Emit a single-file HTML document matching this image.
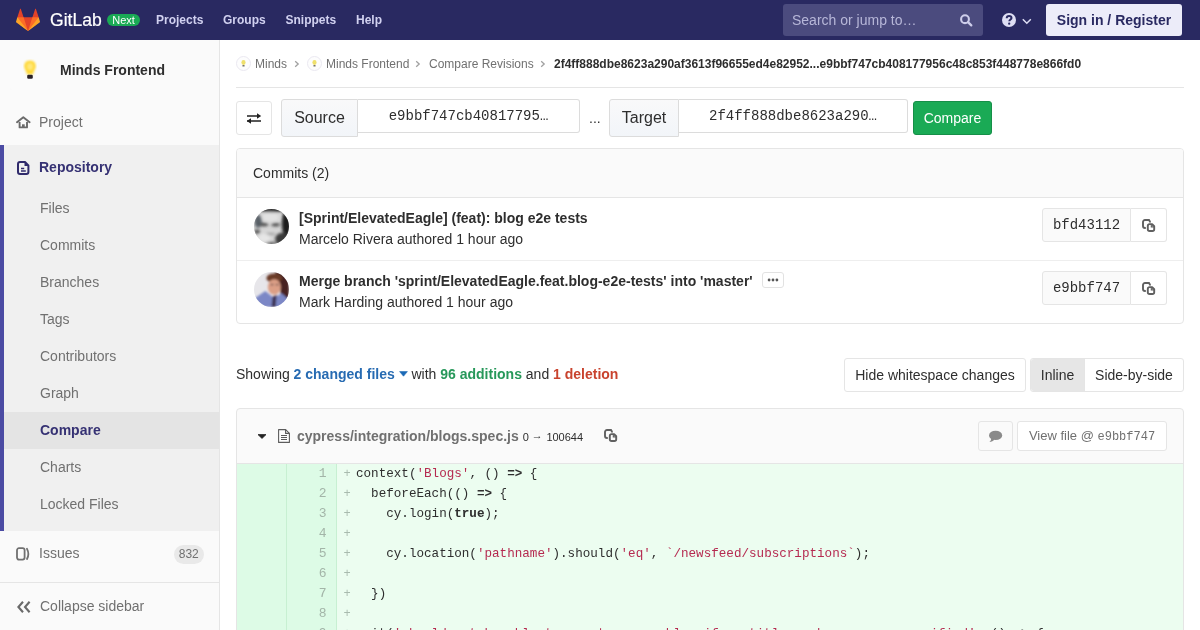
<!DOCTYPE html>
<html><head><meta charset="utf-8"><style>
*{box-sizing:border-box;margin:0;padding:0}
html,body{width:1200px;height:630px;overflow:hidden;background:#fff;font-family:"Liberation Sans",sans-serif;font-size:14px;color:#2e2e2e}
.nav{position:absolute;left:0;top:0;width:1200px;height:40px;background:#292961}
.nav .t{position:absolute;color:#d1d1f0;font-weight:bold;font-size:12px;top:12px;line-height:16px}
.logo{position:absolute;left:16px;top:8px}
.gl{position:absolute;left:49.6px;top:6.6px;color:#fff;font-size:18.7px;line-height:26px;transform:scaleX(.94);transform-origin:0 0;-webkit-text-stroke:.2px #fff}
.next{position:absolute;left:107px;top:14px;width:33px;height:12px;border-radius:6px;background:#1aaa55;color:#fff;font-size:11px;line-height:12px;text-align:center}
.search{position:absolute;left:783px;top:4px;width:200px;height:32px;border-radius:3px;background:#4b4b7e;color:#b7b7d8;font-size:14px;line-height:32px;padding-left:9px}
.signin{position:absolute;left:1046px;top:4px;width:136px;height:32px;border-radius:3px;background:#ececf9;color:#292961;font-weight:bold;font-size:14px;line-height:32px;text-align:center}
.side{position:absolute;left:0;top:40px;width:220px;height:590px;background:#fafafa;border-right:1px solid #e5e5e5}
.side .it{position:absolute;left:40px;color:#707070;font-size:14px;line-height:16px}
.main{position:absolute;left:220px;top:40px;width:980px;height:590px}
.abs{position:absolute}
.mono{font-family:"Liberation Mono",monospace}
.bc{position:absolute;font-size:12px;line-height:16px;color:#707070;white-space:nowrap}
.btn{border:1px solid #e5e5e5;border-radius:3px;background:#fff;font-size:14px;color:#2e2e2e;white-space:nowrap}
.addon{border:1px solid #dcdcdc;border-radius:3px 0 0 3px;background:linear-gradient(#f9f9fa,#f2f5f9);font-size:16px;line-height:36px;text-align:center;color:#2e2e2e}
.inp{border:1px solid #dcdcdc;border-left:0;border-radius:0 3px 3px 0;background:#fff;font-size:14px;line-height:32px;text-align:center;color:#2e2e2e}
.av{width:36px;height:36px;border-radius:50%;border:1px solid #e5e5e5}
.ct{font-weight:bold;font-size:14px;line-height:16px;color:#2e2e2e;white-space:nowrap}
.cs{font-size:14px;line-height:16px;color:#2e2e2e;white-space:nowrap}
.sha{width:89px;height:34px;border:1px solid #e5e5e5;border-radius:3px 0 0 3px;background:#fafafa;font-size:14px;line-height:32px;text-align:center;color:#2e2e2e}
.cpy{width:36px;height:34px;border:1px solid #e5e5e5;border-left:0;border-radius:0 3px 3px 0;background:#fff}
.code{background:#ecfdf0;overflow:hidden}
.ln{position:absolute;top:0;width:50px;height:200px;background:#ddfbe6;border-right:1px solid #c7f0d2}
.num{position:absolute;left:49.5px;width:40px;text-align:right;font-family:"Liberation Mono",monospace;font-size:13px;line-height:20px;color:#a3b5a8}
.pl{position:absolute;left:106.6px;font-family:"Liberation Mono",monospace;font-size:12px;line-height:19px;margin-top:1px;color:#a9bbae}
.cl{position:absolute;left:119px;font-family:"Liberation Mono",monospace;font-size:12.6px;line-height:20px;color:#2e2e2e;white-space:pre}
.cl r{color:#b52a50}
body{will-change:transform}
</style></head><body>
<div class="nav">
  <svg class="logo" width="24" height="24" viewBox="0 0 36 36"><path fill="#e24329" d="M2 14l9.38 9v-9l-4-12.28c-.205-.632-1.176-.632-1.38 0z"/><path fill="#e24329" d="M34 14l-9.38 9v-9l4-12.28c.205-.632 1.176-.632 1.38 0z"/><path fill="#e24329" d="M18,34.38 3,14 33,14 Z"/><path fill="#fc6d26" d="M18,34.38 11.38,14 2,14 6,25Z"/><path fill="#fc6d26" d="M18,34.38 24.62,14 34,14 30,25Z"/><path fill="#fca326" d="M2 14L.1 20.16c-.18.565 0 1.2.5 1.56l17.42 12.66z"/><path fill="#fca326" d="M34 14l1.9 6.16c.18.565 0 1.2-.5 1.56L18 34.38z"/></svg>
  <div class="gl">GitLab</div>
  <div class="next">Next</div>
  <div class="t" style="left:156px">Projects</div>
  <div class="t" style="left:223px">Groups</div>
  <div class="t" style="left:285.5px">Snippets</div>
  <div class="t" style="left:356px">Help</div>
  <div class="search">Search or jump to…</div>
  <svg class="abs" style="left:958px;top:12px" width="16" height="16" viewBox="0 0 16 16"><circle cx="7" cy="7.2" r="3.9" fill="none" stroke="#cdcdea" stroke-width="2.1"/><path d="M10 10.2 L13.3 13.4" stroke="#cdcdea" stroke-width="2.3" stroke-linecap="round"/></svg>
  <svg class="abs" style="left:1002px;top:13px" width="14" height="14" viewBox="0 0 14 14"><circle cx="7" cy="7" r="7" fill="#dedef4"/><path d="M4.7 5.3 C4.7 3.6 5.8 2.9 7.1 2.9 C8.5 2.9 9.5 3.7 9.5 4.9 C9.5 6.4 7.4 6.6 7.3 8.3" fill="none" stroke="#292961" stroke-width="2"/><circle cx="7.2" cy="10.7" r="1.15" fill="#292961"/></svg>
  <svg class="abs" style="left:1021px;top:17px" width="12" height="8" viewBox="0 0 12 8"><path d="M1.8 2.2 L5.8 6.2 L9.8 2.2" fill="none" stroke="#dedef4" stroke-width="1.5"/></svg>
  <div class="signin">Sign in / Register</div>
</div>
<div class="side">
  <div class="abs" style="left:60px;top:22px;font-weight:bold;font-size:14px;color:#2e2e2e">Minds Frontend</div>
  <div class="it" style="left:39px;top:74px">Project</div>
  <div class="abs" style="left:0;top:105px;width:219px;height:386px;background:#f0f0f0"></div>
  <div class="abs" style="left:0;top:105px;width:4px;height:386px;background:#4b4ba3"></div>
  <div class="abs" style="left:0;top:372px;width:219px;height:37px;background:#e4e4e4"></div>
  <div class="abs" style="left:0;top:372px;width:4px;height:37px;background:#4b4ba3"></div>
  <div class="it" style="left:39px;top:119px;color:#353173;font-weight:bold">Repository</div>
  <div class="it" style="top:160px">Files</div>
  <div class="it" style="top:197px">Commits</div>
  <div class="it" style="top:234px">Branches</div>
  <div class="it" style="top:271px">Tags</div>
  <div class="it" style="top:308px">Contributors</div>
  <div class="it" style="top:345px">Graph</div>
  <div class="it" style="top:382px;color:#353173;font-weight:bold">Compare</div>
  <div class="it" style="top:419px">Charts</div>
  <div class="it" style="top:456px">Locked Files</div>
  <div class="it" style="left:39px;top:505px">Issues</div>
  <div class="abs" style="left:0;top:542px;width:219px;height:1px;background:#e5e5e5"></div>
  <div class="it" style="top:558px">Collapse sidebar</div>

  <div class="abs" style="left:10px;top:10px;width:40px;height:40px;background:#fbfbfb;border-radius:3px"></div>
  <svg class="abs" style="left:20px;top:18px" width="20" height="24" viewBox="0 0 20 24"><defs><filter id="bl"><feGaussianBlur stdDeviation="0.8"/></filter><filter id="bl2"><feGaussianBlur stdDeviation="0.4"/></filter></defs><path d="M10 2.5 C5.8 2.5 4.2 5.6 4.2 8.2 C4.2 11 6.4 12.6 7 16.6 L13 16.6 C13.6 12.6 15.8 11 15.8 8.2 C15.8 5.6 14.2 2.5 10 2.5Z" fill="#ffd93a" filter="url(#bl)"/><ellipse cx="10" cy="8.5" rx="3" ry="3.6" fill="#ffe879" filter="url(#bl)"/><rect x="7.2" y="16.8" width="5.6" height="3.9" rx="1.2" fill="#2a2228" filter="url(#bl2)"/></svg>
  <svg class="abs" style="left:16px;top:76px" width="15" height="13" viewBox="0 0 15 13"><path d="M1 6.2 L7.3 1.2 L13.6 6.2" fill="none" stroke="#6b6b6b" stroke-width="1.9" stroke-linejoin="round" stroke-linecap="round"/><path d="M3.6 6 V11.4 H11 V6" fill="none" stroke="#6b6b6b" stroke-width="1.9" stroke-linejoin="round"/><rect x="6" y="8.3" width="2.7" height="3.2" fill="#6b6b6b"/></svg>
  <svg class="abs" style="left:17px;top:121px" width="13" height="14" viewBox="0 0 13 14"><path d="M3 1 H8 L11.4 4.4 V11 A2 2 0 0 1 9.4 13 H3 A2 2 0 0 1 1 11 V3 A2 2 0 0 1 3 1Z" fill="none" stroke="#2f2a6b" stroke-width="2" stroke-linejoin="round"/><path d="M7.5 0.8 L11.8 5 H7.5Z" fill="#2f2a6b"/><path d="M4 7.5 H7.2 M4 10 H8.8" stroke="#2f2a6b" stroke-width="1.4"/></svg>
  <svg class="abs" style="left:16px;top:507px" width="14" height="14" viewBox="0 0 14 14"><rect x="1" y="1.2" width="7.6" height="11.4" rx="2" fill="none" stroke="#707070" stroke-width="1.8"/><path d="M11 1.8 C12.6 4.8 12.6 9 11 12" fill="none" stroke="#707070" stroke-width="1.8" stroke-linecap="round"/></svg>
  <svg class="abs" style="left:16px;top:560px" width="15" height="14" viewBox="0 0 15 14"><path d="M7 1.7 L2.4 7 L7 12.3 M13.6 1.7 L9 7 L13.6 12.3" fill="none" stroke="#6a6a6a" stroke-width="2.1"/></svg>
  <div class="abs" style="left:174px;top:505px;width:29.5px;height:18.5px;border-radius:10px;background:#e9e9e9;color:#707070;font-size:12px;line-height:19px;text-align:center">832</div>

</div>
<div class="main">
  <!-- breadcrumbs -->
  <div class="bc" style="left:35px;top:16px">Minds</div>
  <div class="bc" style="left:106px;top:16px">Minds Frontend</div>
  <div class="bc" style="left:209px;top:16px">Compare Revisions</div>
  <div class="bc" style="left:334px;top:16px;color:#2e2e2e;font-weight:bold">2f4ff888dbe8623a290af3613f96655ed4e82952...e9bbf747cb408177956c48c853f448778e866fd0</div>
  <div class="abs" style="left:16px;top:47px;width:948px;height:1px;background:#e5e5e5"></div>
  <!-- compare form -->
  <div class="abs btn" style="left:16px;top:61px;width:36px;height:34px"></div>
  <div class="abs addon" style="left:61px;top:59px;width:77px;height:38px">Source</div>
  <div class="abs inp mono" style="left:138px;top:59px;width:222px;height:34px">e9bbf747cb40817795…</div>
  <div class="abs" style="left:369px;top:70px;font-size:14px">...</div>
  <div class="abs addon" style="left:389px;top:59px;width:70px;height:38px">Target</div>
  <div class="abs inp mono" style="left:459px;top:59px;width:229px;height:34px">2f4ff888dbe8623a290…</div>
  <div class="abs" style="left:693px;top:61px;width:79px;height:34px;background:#1aaa55;border:1px solid #168f48;border-radius:3px;color:#fff;font-size:14px;line-height:32px;text-align:center">Compare</div>
  <!-- commits panel -->
  <div class="abs" style="left:16px;top:108px;width:948px;height:176px;border:1px solid #e5e5e5;border-radius:4px;background:#fff"></div>
  <div class="abs" style="left:17px;top:109px;width:946px;height:49px;background:#fafafa;border-bottom:1px solid #e5e5e5;border-radius:3px 3px 0 0"></div>
  <div class="abs" style="left:33px;top:125px;font-size:14px;line-height:16px">Commits (2)</div>
  <div class="abs" style="left:17px;top:220px;width:946px;height:1px;background:#eee"></div>
<svg class="abs" style="left:33.5px;top:168.5px" width="35" height="35" viewBox="0 0 34 34"><defs><clipPath id="c1"><circle cx="17" cy="17" r="17"/></clipPath><filter id="b1" x="-20%" y="-20%" width="140%" height="140%"><feGaussianBlur stdDeviation="1.3"/></filter></defs><g clip-path="url(#c1)"><rect width="34" height="34" fill="#d6d6d6"/><g filter="url(#b1)"><ellipse cx="17" cy="0" rx="15" ry="3.2" fill="#2a2a2a"/><ellipse cx="31.5" cy="14" rx="4.5" ry="13" fill="#1e1e1e"/><ellipse cx="27.5" cy="29" rx="7" ry="6" fill="#3a3a3a"/><ellipse cx="4" cy="12" rx="3.6" ry="6.5" fill="#596068"/><ellipse cx="3" cy="22" rx="3" ry="2" fill="#555"/><ellipse cx="9.5" cy="15" rx="4.5" ry="1.7" fill="#4a4a4a"/><ellipse cx="21" cy="15.3" rx="4.2" ry="1.6" fill="#4a4a4a"/><ellipse cx="16" cy="24.2" rx="5" ry="1" fill="#9a9a9a"/><ellipse cx="16" cy="8" rx="8" ry="4.5" fill="#e2e2e2"/><ellipse cx="10" cy="28" rx="6" ry="4" fill="#e6e6e6"/><ellipse cx="17" cy="33.5" rx="6" ry="1.5" fill="#555"/></g></g></svg>
<svg class="abs" style="left:33.5px;top:231.5px" width="35" height="35" viewBox="0 0 34 34"><defs><clipPath id="c2"><circle cx="17" cy="17" r="17"/></clipPath><filter id="b2" x="-20%" y="-20%" width="140%" height="140%"><feGaussianBlur stdDeviation="1.2"/></filter></defs><g clip-path="url(#c2)"><rect width="34" height="34" fill="#e7e6ea"/><g filter="url(#b2)"><path d="M20 0 H34 V26 H26 C26 14 24 6 20 0Z" fill="#472322"/><ellipse cx="19.7" cy="6" rx="7.6" ry="4.6" fill="#6b3a26"/><ellipse cx="19.7" cy="14.6" rx="6.3" ry="7.6" fill="#dc9f86"/><ellipse cx="17.5" cy="12.2" rx="1.6" ry=".9" fill="#7a5a55"/><ellipse cx="22.5" cy="12.2" rx="1.6" ry=".9" fill="#7a5a55"/><path d="M0 26 L11 18.5 L19 25 L27 21 L34 27 V34 H0Z" fill="#7b87c6"/><path d="M18 24 L22 22 L21 34 H17Z" fill="#3d3252"/></g></g></svg>
  <div class="abs ct" style="left:79px;top:170px">[Sprint/ElevatedEagle] (feat): blog e2e tests</div>
  <div class="abs cs" style="left:79px;top:191px">Marcelo Rivera authored 1 hour ago</div>
  <div class="abs ct" style="left:79px;top:233px">Merge branch 'sprint/ElevatedEagle.feat.blog-e2e-tests' into 'master'</div>
  <div class="abs cs" style="left:79px;top:254px">Mark Harding authored 1 hour ago</div>
  <div class="abs sha mono" style="left:822px;top:168px">bfd43112</div>
  <div class="abs cpy" style="left:911px;top:168px"></div>
  <div class="abs sha mono" style="left:822px;top:231px">e9bbf747</div>
  <div class="abs cpy" style="left:911px;top:231px"></div>
  <!-- showing -->
  <div class="abs" style="left:16px;top:326px;font-size:14px;line-height:16px;white-space:nowrap">Showing <b style="color:#276bb2">2 changed files</b> <span style="display:inline-block;width:12.8px"></span>with <b style="color:#27985a">96 additions</b> and <b style="color:#c9432e">1 deletion</b></div>
  <div class="abs btn" style="left:624px;top:318px;width:182px;height:34px;line-height:32px;text-align:center">Hide whitespace changes</div>
  <div class="abs btn" style="left:810px;top:318px;width:154px;height:34px"></div>
  <div class="abs" style="left:811px;top:319px;width:54px;height:32px;background:#e6e6e6;border-right:1px solid #e5e5e5;border-radius:3px 0 0 3px;line-height:32px;text-align:center">Inline</div>
  <div class="abs" style="left:865px;top:319px;width:98px;height:32px;line-height:32px;text-align:center">Side-by-side</div>
  <!-- file -->
  <div class="abs" style="left:16px;top:368px;width:948px;height:300px;border:1px solid #e5e5e5;border-radius:4px 4px 0 0;background:#fafafa"></div>
  <div class="abs" style="left:17px;top:423px;width:946px;height:1px;background:#e5e5e5"></div>
  <div class="abs" style="left:77px;top:388px;font-size:14px;line-height:16px;font-weight:bold;color:#707070;white-space:nowrap">cypress/integration/blogs.spec.js <span style="font-weight:normal;font-size:11px;color:#2e2e2e">0 <span style="position:relative;top:-2px;margin-right:.5px">→</span> 100644</span></div>
  <div class="abs btn" style="left:758px;top:381px;width:35px;height:30px;background:#fafafa"></div>
  <div class="abs btn" style="left:797px;top:381px;width:150px;height:30px;line-height:28px;text-align:center;color:#707070;font-size:13px;white-space:nowrap">View file @ <span class="mono" style="font-size:12px">e9bbf747</span></div>
  <div class="abs code" style="left:17px;top:424px;width:946px;height:170px">
    <div class="ln" style="left:0"></div><div class="ln" style="left:50px"></div>
    <div class="num" style="top:0px">1</div><div class="pl" style="top:0px">+</div><pre class="cl" style="top:0px">context(<r>'Blogs'</r>, () <b>=></b> {</pre>
    <div class="num" style="top:20px">2</div><div class="pl" style="top:20px">+</div><pre class="cl" style="top:20px">  beforeEach(() <b>=></b> {</pre>
    <div class="num" style="top:40px">3</div><div class="pl" style="top:40px">+</div><pre class="cl" style="top:40px">    cy.login(<b>true</b>);</pre>
    <div class="num" style="top:60px">4</div><div class="pl" style="top:60px">+</div><pre class="cl" style="top:60px"></pre>
    <div class="num" style="top:80px">5</div><div class="pl" style="top:80px">+</div><pre class="cl" style="top:80px">    cy.location(<r>'pathname'</r>).should(<r>'eq'</r>, <r>`/newsfeed/subscriptions`</r>);</pre>
    <div class="num" style="top:100px">6</div><div class="pl" style="top:100px">+</div><pre class="cl" style="top:100px"></pre>
    <div class="num" style="top:120px">7</div><div class="pl" style="top:120px">+</div><pre class="cl" style="top:120px">  })</pre>
    <div class="num" style="top:140px">8</div><div class="pl" style="top:140px">+</div><pre class="cl" style="top:140px"></pre>
    <div class="num" style="top:160px">9</div><div class="pl" style="top:160px">+</div><pre class="cl" style="top:160px">  it(<r>'should not be able to create a new blog if no title or banner are specified'</r>, () <b>=></b> {</pre>

  </div>

  <svg class="abs" style="left:16px;top:16px" width="15" height="15" viewBox="0 0 15 15"><circle cx="7.5" cy="7.5" r="7" fill="#fdfdfd" stroke="#eae8f1" stroke-width="1"/><ellipse cx="7.5" cy="6.5" rx="2.1" ry="2.4" fill="#efe06c" filter="url(#bl2)"/><rect x="6.4" y="8.9" width="2.2" height="1.7" rx=".5" fill="#77736a" filter="url(#bl2)"/></svg><svg class="abs" style="left:87px;top:16px" width="15" height="15" viewBox="0 0 15 15"><circle cx="7.5" cy="7.5" r="7" fill="#fdfdfd" stroke="#eae8f1" stroke-width="1"/><ellipse cx="7.5" cy="6.5" rx="2.1" ry="2.4" fill="#efe06c" filter="url(#bl2)"/><rect x="6.4" y="8.9" width="2.2" height="1.7" rx=".5" fill="#77736a" filter="url(#bl2)"/></svg><svg class="abs" style="left:74px;top:20px" width="6" height="8" viewBox="0 0 6 8"><path d="M1.2 1.2 L4.2 4 L1.2 6.8" fill="none" stroke="#a0a0a0" stroke-width="1.3"/></svg><svg class="abs" style="left:195px;top:20px" width="6" height="8" viewBox="0 0 6 8"><path d="M1.2 1.2 L4.2 4 L1.2 6.8" fill="none" stroke="#a0a0a0" stroke-width="1.3"/></svg><svg class="abs" style="left:320px;top:20px" width="6" height="8" viewBox="0 0 6 8"><path d="M1.2 1.2 L4.2 4 L1.2 6.8" fill="none" stroke="#a0a0a0" stroke-width="1.3"/></svg>
  <svg class="abs" style="left:26px;top:72px" width="16" height="14" viewBox="0 0 16 14"><path d="M1 4 H11.5 M1 9 H15 M4.5 9 H15" stroke="#222" stroke-width="1.7" fill="none"/><path d="M11 1.2 L15.2 4 L11 6.8Z M5 6.2 L0.8 9 L5 11.8Z" fill="#222"/></svg>
  <div class="abs" style="left:921.5px;top:178.5px"><svg width="14" height="14" viewBox="0 0 14 14"><path d="M7.8 1 H3 A2 2 0 0 0 1 3 V7 A2 2 0 0 0 3 9 H3.8 M8 3.4 V3 A2 2 0 0 0 6 1" fill="none" stroke="#606060" stroke-width="1.9"/><path d="M7.6 5.1 H10.2 L12.2 7.1 V10.2 A1.8 1.8 0 0 1 10.4 12 H7.6 A1.8 1.8 0 0 1 5.8 10.2 V6.9 A1.8 1.8 0 0 1 7.6 5.1Z" fill="none" stroke="#606060" stroke-width="1.9" stroke-linejoin="round"/><path d="M9.3 5 V8 H12.3" fill="none" stroke="#606060" stroke-width="1.1"/><path d="M9.6 4.6 L12.8 7.7 H9.6Z" fill="#606060" opacity=".75"/></svg></div>
  <div class="abs" style="left:921.5px;top:241.5px"><svg width="14" height="14" viewBox="0 0 14 14"><path d="M7.8 1 H3 A2 2 0 0 0 1 3 V7 A2 2 0 0 0 3 9 H3.8 M8 3.4 V3 A2 2 0 0 0 6 1" fill="none" stroke="#606060" stroke-width="1.9"/><path d="M7.6 5.1 H10.2 L12.2 7.1 V10.2 A1.8 1.8 0 0 1 10.4 12 H7.6 A1.8 1.8 0 0 1 5.8 10.2 V6.9 A1.8 1.8 0 0 1 7.6 5.1Z" fill="none" stroke="#606060" stroke-width="1.9" stroke-linejoin="round"/><path d="M9.3 5 V8 H12.3" fill="none" stroke="#606060" stroke-width="1.1"/><path d="M9.6 4.6 L12.8 7.7 H9.6Z" fill="#606060" opacity=".75"/></svg></div>
  <div class="abs" style="left:384px;top:389px"><svg width="14" height="14" viewBox="0 0 14 14"><path d="M7.8 1 H3 A2 2 0 0 0 1 3 V7 A2 2 0 0 0 3 9 H3.8 M8 3.4 V3 A2 2 0 0 0 6 1" fill="none" stroke="#606060" stroke-width="1.9"/><path d="M7.6 5.1 H10.2 L12.2 7.1 V10.2 A1.8 1.8 0 0 1 10.4 12 H7.6 A1.8 1.8 0 0 1 5.8 10.2 V6.9 A1.8 1.8 0 0 1 7.6 5.1Z" fill="none" stroke="#606060" stroke-width="1.9" stroke-linejoin="round"/><path d="M9.3 5 V8 H12.3" fill="none" stroke="#606060" stroke-width="1.1"/><path d="M9.6 4.6 L12.8 7.7 H9.6Z" fill="#606060" opacity=".75"/></svg></div>
  <div class="abs" style="left:542px;top:232px;width:22px;height:16px;border:1px solid #e2e2e2;border-radius:3px;background:#fff"></div>
  <svg class="abs" style="left:547px;top:238px" width="12" height="4" viewBox="0 0 12 4"><circle cx="2.1" cy="2" r="1.4" fill="#555"/><circle cx="6" cy="2" r="1.4" fill="#555"/><circle cx="9.9" cy="2" r="1.4" fill="#555"/></svg>
  <svg class="abs" style="left:37px;top:393px" width="10" height="6" viewBox="0 0 10 6"><path d="M1 1.6 H9 L5 5.4Z" fill="#222" stroke="#222" stroke-width=".8" stroke-linejoin="round"/></svg>
  <svg class="abs" style="left:58px;top:389px" width="12" height="14" viewBox="0 0 12 14"><path d="M.6 .6 H7.6 L11.4 4.4 V13.4 H.6Z" fill="#fff" stroke="#5c5c5c" stroke-width="1.1" stroke-linejoin="round"/><path d="M7.6 .6 V4.4 H11.4" fill="none" stroke="#5c5c5c" stroke-width="1.1"/><path d="M3 6.5 H9 M3 8.5 H9 M3 10.5 H9" stroke="#5c5c5c" stroke-width="1"/></svg>
  <svg class="abs" style="left:768px;top:390px" width="15" height="13" viewBox="0 0 15 13"><ellipse cx="7.6" cy="5.4" rx="6.6" ry="4.7" fill="#8a8a8a"/><path d="M3.2 8 C3.2 10 2.6 11 1.4 12 C3.6 12 5.4 11 6.4 9.6Z" fill="#8a8a8a"/></svg>
  <svg class="abs" style="left:179px;top:331px" width="9" height="6" viewBox="0 0 9 6"><path d="M.6 .6 H8.4 L4.5 5.2Z" fill="#1b69b6" stroke="#1b69b6" stroke-width=".6" stroke-linejoin="round"/></svg>
</div>
</body></html>
